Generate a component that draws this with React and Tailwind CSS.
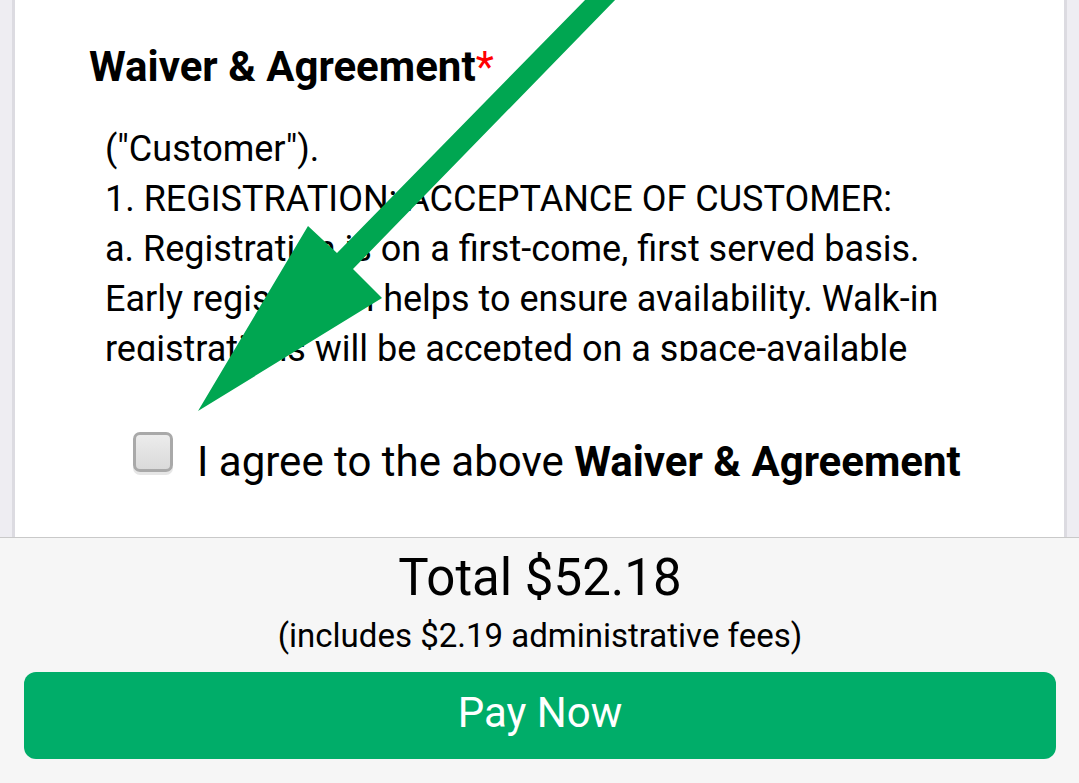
import React from 'react';

const waiverLines = [
  '("Customer").',
  '1. REGISTRATION: ACCEPTANCE OF CUSTOMER:',
  'a. Registration is on a first-come, first served basis.',
  'Early registration helps to ensure availability. Walk-in',
  'registrations will be accepted on a space-available',
  'basis.',
];

const Arrow = () => (
  <svg
    className="absolute inset-0 pointer-events-none"
    width="1079"
    height="783"
    viewBox="0 0 1079 783"
  >
    <polygon
      fill="#00a651"
      points="587,-2 617,-2 353,269 382,298 198,411 308,226 337,253"
    />
  </svg>
);

const App = () => {
  return (
    <div
      className="relative h-[783px] w-full flex flex-col overflow-hidden bg-[#eeedf2] text-black"
      style={{ fontFamily: 'Roboto, "Noto Sans", sans-serif' }}
    >
      {/* Card */}
      <div className="flex-1 min-h-0 px-[12px]">
        <div className="h-full bg-white border-x-[3px] border-[#dcdbe1] pl-[74px] pr-[40px] pt-[43px]">
          <h2 className="text-[42px] leading-[48px] font-bold whitespace-nowrap">
            Waiver &amp; Agreement<span className="text-[#ff0000] font-normal">*</span>
          </h2>

          <div className="mt-[33px] ml-[16px] h-[237px] overflow-hidden text-[36px] leading-[50px]">
            {waiverLines.map((line, i) => (
              <div key={i} className="whitespace-nowrap">{line}</div>
            ))}
          </div>

          <label className="mt-[71px] ml-[44px] flex items-start gap-[24px]">
            <span className="w-[40px] h-[40px] shrink-0 rounded-[7px] border-[3px] border-[#a9a9a9] bg-gradient-to-b from-[#ececec] to-[#dadada] shadow-[0_3px_0_#e6e6e6]" />
            <span className="mt-[6px] text-[42px] leading-[48px] whitespace-nowrap">
              I agree to the above <span className="font-bold">Waiver &amp; Agreement</span>
            </span>
          </label>
        </div>
      </div>

      {/* Footer */}
      <div className="h-[246px] shrink-0 border-t border-[#c9c9c9] bg-[#f6f6f6] pt-[10px] pl-[24px] pr-[23px] text-center">
        <div className="text-[51px] leading-[60px]">Total $52.18</div>
        <div className="mt-[8px] text-[33px] leading-[40px]">(includes $2.19 administrative fees)</div>
        <button className="mt-[16px] w-full h-[87px] pb-[6px] rounded-[12px] bg-[#00ad69] text-white text-[42px] flex items-center justify-center">
          Pay Now
        </button>
      </div>

      <Arrow />
    </div>
  );
};

export default App;
